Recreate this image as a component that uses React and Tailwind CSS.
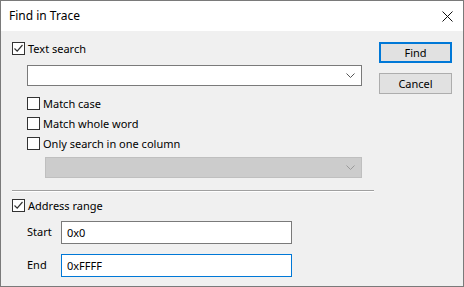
import { useState } from "react";

// Find in Trace dialog (Windows 10 style)

function CheckBox({ checked }) {
  return (
    <span className="w-[13px] h-[13px] border border-[#333333] bg-white flex items-center justify-center shrink-0">
      {checked && (
        <svg width="11" height="11" viewBox="0 0 11 11">
          <path d="M1.5 5.5 L4.2 8.2 L9.5 2" fill="none" stroke="#333333" strokeWidth="1.2" />
        </svg>
      )}
    </span>
  );
}

function Chevron({ color }) {
  return (
    <svg width="9" height="5" viewBox="0 0 9 5">
      <path d="M0.5 0.5 L4.5 4.5 L8.5 0.5" fill="none" stroke={color} strokeWidth="1" />
    </svg>
  );
}

function CheckRow({ checked, label, className = "" }) {
  return (
    <label className={`flex items-center h-[13px] ${className}`}>
      <CheckBox checked={checked} />
      <span className="ml-[3px] leading-none">{label}</span>
    </label>
  );
}

export default function App() {
  const [start, setStart] = useState("0x0");
  const [end, setEnd] = useState("0xFFFF");

  return (
    <div
      className="w-[464px] h-[287px] border border-[#7a7a7a] bg-[#f0f0f0] flex flex-col text-[11px] text-black"
      style={{ fontFamily: '"Segoe UI", "Noto Sans", sans-serif' }}
    >
      {/* Title bar */}
      <div className="h-[30px] bg-white flex items-center justify-between pl-[8px] pr-[10px] shrink-0">
        <span className="text-[12px]">Find in Trace</span>
        <svg width="11" height="11" viewBox="0 0 11 11">
          <path d="M0.5 0.5 L10.5 10.5 M10.5 0.5 L0.5 10.5" stroke="#111111" strokeWidth="1" />
        </svg>
      </div>

      {/* Body */}
      <div className="flex pl-[11px] pt-[11px]">
        <div className="w-[362px] flex flex-col">
          <CheckRow checked label="Text search" />

          <div className="ml-[15px] mt-[10px] w-[335px] h-[21px] border border-[#7a7a7a] bg-white flex items-center justify-end pr-[6px]">
            <Chevron color="#555555" />
          </div>

          <CheckRow label="Match case" className="ml-[15px] mt-[11px]" />
          <CheckRow label="Match whole word" className="ml-[15px] mt-[7px]" />
          <CheckRow label="Only search in one column" className="ml-[15px] mt-[7px]" />

          <div className="ml-[33px] mt-[7px] w-[317px] h-[21px] border border-[#bfbfbf] bg-[#cccccc] flex items-center justify-end pr-[6px]">
            <Chevron color="#9a9a9a" />
          </div>

          <div className="mt-[12px] h-[2px] border-t border-[#a0a0a0] border-b border-b-white" />

          <CheckRow checked label="Address range" className="mt-[7px]" />

          <div className="flex items-center mt-[9px] h-[23px]">
            <span className="w-[49px] pl-[15px]">Start</span>
            <input
              value={start}
              onChange={(e) => setStart(e.target.value)}
              className="w-[231px] h-[23px] border border-[#7a7a7a] bg-white px-[5px] outline-none"
            />
          </div>
          <div className="flex items-center mt-[10px] h-[23px]">
            <span className="w-[49px] pl-[15px]">End</span>
            <input
              value={end}
              onChange={(e) => setEnd(e.target.value)}
              className="w-[231px] h-[23px] border border-[#0078d7] bg-white px-[5px] outline-none"
            />
          </div>
        </div>

        {/* Buttons */}
        <div className="ml-[5px] flex flex-col gap-[10px]">
          <button className="w-[73px] h-[21px] border-2 border-[#0078d7] bg-[#e1e1e1] leading-none">Find</button>
          <button className="w-[73px] h-[21px] border border-[#adadad] bg-[#e1e1e1] leading-none">Cancel</button>
        </div>
      </div>
    </div>
  );
}
